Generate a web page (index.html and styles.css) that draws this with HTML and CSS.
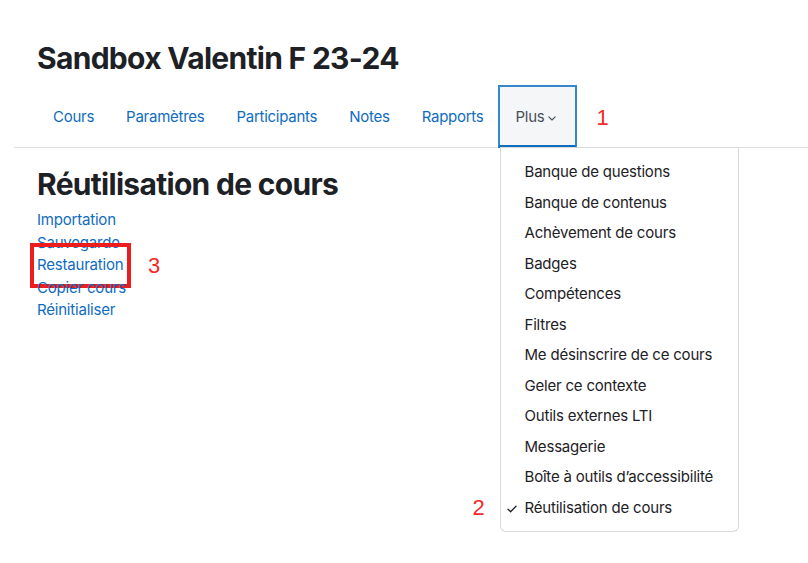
FILE: index.html
```html
<!DOCTYPE html>
<html lang="fr">
<head>
<meta charset="utf-8">
<title>Réutilisation de cours</title>
<link rel="stylesheet" href="styles.css">
</head>
<body>
<div class="page">
  <header class="page-header">
    <h1 class="course-title">Sandbox Valentin F 23-24</h1>
  </header>
  <nav class="secondary-nav">
    <ul class="tabs">
      <li class="tab"><a class="tab-link" href="#">Cours</a></li>
      <li class="tab"><a class="tab-link" href="#">Paramètres</a></li>
      <li class="tab"><a class="tab-link" href="#">Participants</a></li>
      <li class="tab"><a class="tab-link" href="#">Notes</a></li>
      <li class="tab"><a class="tab-link" href="#">Rapports</a></li>
      <li class="tab tab-more">
        <a class="tab-link more-toggle" href="#">Plus
          <svg class="chevron" width="8" height="5" viewBox="0 0 8 5"><polyline points="0.8,0.8 4,4 7.2,0.8" fill="none" stroke="#495057" stroke-width="1.1" stroke-linecap="round" stroke-linejoin="round"/></svg>
        </a>
        <span class="anno anno-1">1</span>
        <ul class="dropdown">
          <li class="dd-item">Banque de questions</li>
          <li class="dd-item">Banque de contenus</li>
          <li class="dd-item">Achèvement de cours</li>
          <li class="dd-item">Badges</li>
          <li class="dd-item">Compétences</li>
          <li class="dd-item">Filtres</li>
          <li class="dd-item">Me désinscrire de ce cours</li>
          <li class="dd-item">Geler ce contexte</li>
          <li class="dd-item">Outils externes LTI</li>
          <li class="dd-item">Messagerie</li>
          <li class="dd-item">Boîte à outils d’accessibilité</li>
          <li class="dd-item dd-active">
            <span class="anno anno-2">2</span>
            <svg class="check" width="10" height="8" viewBox="0 0 10 8"><polyline points="1,4.2 3.6,6.8 9,1.2" fill="none" stroke="#1d2125" stroke-width="1.3" stroke-linecap="round" stroke-linejoin="round"/></svg>
            Réutilisation de cours
          </li>
        </ul>
      </li>
    </ul>
  </nav>
  <main class="content">
    <h2 class="page-heading">Réutilisation de cours</h2>
    <ul class="links">
      <li class="link-row"><a href="#">Importation</a></li>
      <li class="link-row"><a href="#">Sauvegarde</a></li>
      <li class="link-row marked"><a href="#">Restauration</a><span class="red-box"></span><span class="anno anno-3">3</span></li>
      <li class="link-row"><a href="#">Copier cours</a></li>
      <li class="link-row"><a href="#">Réinitialiser</a></li>
    </ul>
  </main>
</div>
</body>
</html>
```

FILE: styles.css
```css
* { box-sizing: border-box; }

html, body {
  margin: 0;
  padding: 0;
  background: #fff;
}

body {
  min-height: 563px;
  font-family: Inter, "Liberation Sans", sans-serif;
  font-size: 15px;
  line-height: 22.5px;
  letter-spacing: -0.2px;
  color: #1d2125;
}

a {
  color: #0f6cbf;
  text-decoration: none;
}

ul {
  list-style: none;
  margin: 0;
  padding: 0;
}

.page {
  margin-left: 14px;
  min-height: 563px;
}

.page-header {
  padding: 40px 0 0 23px;
}

.course-title {
  margin: 0;
  font-size: 30px;
  line-height: 36px;
  font-weight: 700;
  letter-spacing: -0.7px;
  color: #1d2125;
}

.secondary-nav {
  margin-top: 9px;
  padding-left: 23px;
  border-bottom: 1px solid #dee2e6;
}

.tabs {
  display: flex;
  height: 62px;
}

.tab {
  display: flex;
}

.tab-link {
  display: flex;
  align-items: center;
  padding: 3px 16px 0;
  height: 62px;
  letter-spacing: -0.26px;
}

.tab-more {
  position: relative;
}

.more-toggle {
  color: #495057;
  background: #f5f6f8;
  border: 2px solid #3688cc;
  border-bottom: 3px solid #0f6cbf;
  padding: 3px 19px 0 16px;
  margin-left: -2px;
  margin-bottom: -1px;
  height: 63px;
  gap: 4px;
}

.chevron {
  margin-top: 1px;
}

.anno {
  position: absolute;
  color: #f22a2a;
  font-family: "Liberation Sans", Arial, sans-serif;
  font-size: 22px;
  line-height: 22px;
  letter-spacing: 0;
}

.anno-1 {
  left: 97px;
  top: 22px;
}

.dropdown {
  position: absolute;
  left: 0;
  top: 62px;
  width: 239px;
  padding: 9px 0 8px;
  background: #fff;
  border: 1px solid rgba(0, 0, 0, 0.15);
  border-radius: 0 0 6px 6px;
  z-index: 5;
}

.dd-item {
  position: relative;
  padding: 4px 24px;
  line-height: 22.5px;
  white-space: nowrap;
  color: #1d2125;
}

.check {
  position: absolute;
  left: 6px;
  top: 12px;
}

.anno-2 {
  left: -28px;
  top: 4px;
}

.content {
  padding: 18px 0 0 23px;
}

.page-heading {
  margin: 0 0 7px;
  font-size: 30px;
  line-height: 36px;
  font-weight: 700;
  letter-spacing: -0.7px;
  color: #1d2125;
}

.link-row {
  position: relative;
  line-height: 22.5px;
}

.red-box {
  position: absolute;
  left: -7px;
  top: -11px;
  width: 101px;
  height: 45px;
  border: 4px solid #ee1d1d;
}

.anno-3 {
  left: 111px;
  top: 1px;
}
```
